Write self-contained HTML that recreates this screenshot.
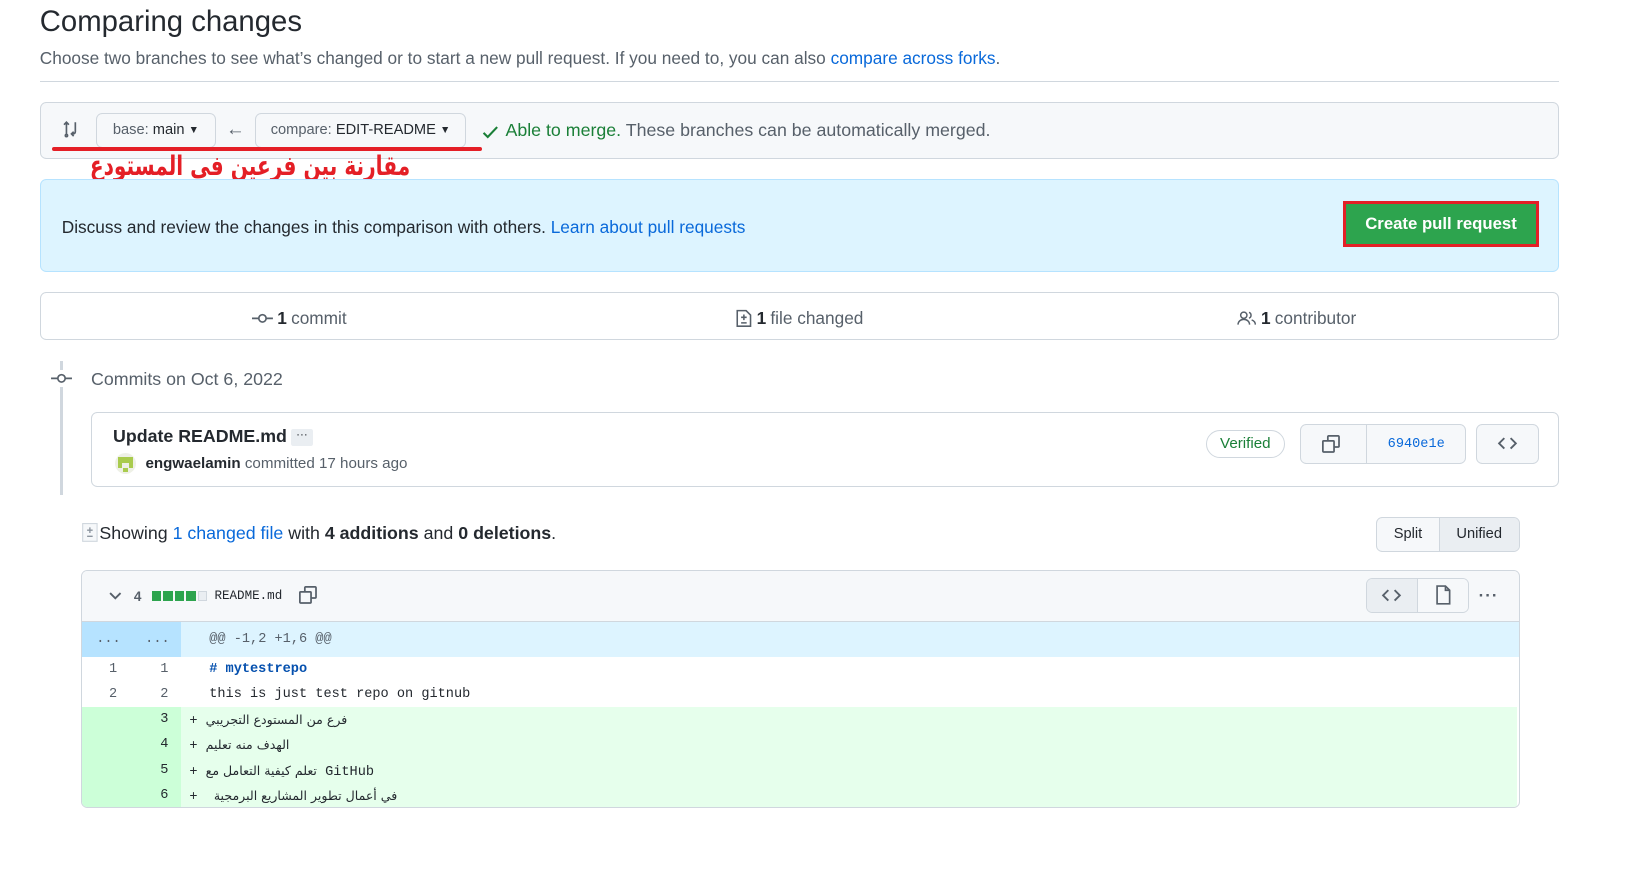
<!DOCTYPE html>
<html><head><meta charset="utf-8"><style>
*{box-sizing:border-box;margin:0;padding:0}
html,body{width:1641px;height:873px;overflow:hidden;background:#fff}
#w{zoom:1.0465;width:1568px;height:835px;position:relative;font-family:"Liberation Sans","Noto Sans CJK SC",sans-serif;color:#24292f}
.a{position:absolute}
.box{position:absolute;border:1px solid #d0d7de;border-radius:6px}
.btn{position:absolute;border:1px solid #d0d7de;border-radius:6px;background:#f6f8fa;font-size:14px;display:flex;align-items:center;justify-content:center}
.mono{font-family:"Liberation Mono","DejaVu Sans Mono",monospace}
.row{position:absolute;left:1px;right:1px;height:24px;font-size:13px;line-height:24px}
.n1,.n2{position:absolute;width:48px;text-align:right;color:#57606a;height:24px}
.n1{left:0;padding-right:14px;width:48px}.n2{left:48px;width:47px;padding-right:12px}
.code{position:absolute;left:95px;right:0;height:24px;padding-left:27px}
.add .n1,.add .n2{background:#ccffd8;color:#24292f}
.add .code{background:#e6ffec;padding-left:8px}
.ar{font-family:"DejaVu Sans","Noto Sans CJK SC",sans-serif;font-size:12px}
svg{display:block}
</style></head><body><div id="w">

<div class="a" style="left:38px;top:5px;font-size:28px">Comparing changes</div>
<div class="a" style="left:38px;top:46px;font-size:16.5px;color:#57606a">Choose two branches to see what’s changed or to start a new pull request. If you need to, you can also <span style="color:#0969da">compare across forks</span>.</div>
<div class="a" style="left:38px;top:77px;width:1452px;height:1px;background:#d0d7de"></div>

<div class="box" style="left:38px;top:97px;width:1452px;height:55px;background:#f6f8fa"></div>
<svg class="a" style="left:59px;top:115px" width="17" height="17" viewBox="0 0 16 16" fill="none" stroke="#57606a" stroke-width="1.5"><path d="M4 14V2M1.8 4.2L4 2l2.2 2.2M12 2v8.5a2 2 0 0 1-2 2H8.5M10.5 10.5l-2 2 2 2"/><circle cx="4" cy="14" r="1"/></svg>
<div class="btn" style="left:92px;top:108px;width:114px;height:33px;color:#57606a">base:&nbsp;<span style="color:#24292f">main</span>&nbsp;<span style="font-size:10px;color:#24292f">▼</span></div>
<div class="a" style="left:216px;top:113px;font-size:18px;color:#57606a">←</div>
<div class="btn" style="left:244px;top:108px;width:201px;height:33px;color:#57606a">compare:&nbsp;<span style="color:#24292f">EDIT-README</span>&nbsp;<span style="font-size:10px;color:#24292f">▼</span></div>
<svg class="a" style="left:461px;top:119px" width="16" height="14" viewBox="0 0 16 14" fill="none" stroke="#1a7f37" stroke-width="2"><path d="M1.5 7.5l4 4L14.5 2"/></svg>
<div class="a" style="left:483px;top:115px;font-size:17px;color:#57606a"><span style="color:#1a7f37">Able to merge.</span> These branches can be automatically merged.</div>
<div class="a" style="left:50px;top:140px;width:411px;height:4px;background:#e41f26;border-radius:2px"></div>
<div class="a" dir="rtl" style="left:-20px;top:144px;width:412px;font-size:26px;font-weight:bold;color:#e41f26;font-family:'DejaVu Sans',sans-serif;white-space:nowrap;text-align:right;transform:scaleX(0.74);transform-origin:right center">مقارنة بين فرعين في المستودع</div>

<div class="a" style="left:38px;top:171px;width:1452px;height:89px;background:#ddf4ff;border:1px solid #b6e3ff;border-radius:6px"></div>
<div class="a" style="left:59px;top:207px;font-size:16.5px">Discuss and review the changes in this comparison with others. <span style="color:#0969da">Learn about pull requests</span></div>
<div class="a" style="left:1283px;top:192px;width:188px;height:44px;border:3px solid #e41f26;background:#2da44e;color:#fff;font-weight:bold;font-size:16px;display:flex;align-items:center;justify-content:center">Create pull request</div>

<div class="box" style="left:38px;top:279px;width:1452px;height:46px"></div>
<div class="a" style="left:241px;top:294px;font-size:16.5px;color:#57606a;display:flex;align-items:center"><svg width="20" height="16" viewBox="0 0 20 16"><circle cx="10" cy="8" r="3.5" fill="none" stroke="#57606a" stroke-width="1.6"/><path d="M0 8h6.5M13.5 8H20" stroke="#57606a" stroke-width="1.6"/></svg><b style="color:#24292f;margin:0 4px 0 4px">1</b>commit</div>
<div class="a" style="left:702px;top:294px;font-size:16.5px;color:#57606a;display:flex;align-items:center"><svg width="17" height="18" viewBox="0 0 16 17"><path d="M2 1.5h8l4 4v10H2z" fill="none" stroke="#57606a" stroke-width="1.4"/><path d="M8 5v5M5.5 7.5h5M5.5 12.5h5" stroke="#57606a" stroke-width="1.4"/></svg><b style="color:#24292f;margin:0 4px">1</b>file changed</div>
<div class="a" style="left:1182px;top:294px;font-size:16.5px;color:#57606a;display:flex;align-items:center"><svg width="19" height="16" viewBox="0 0 19 16"><circle cx="6.5" cy="5" r="3" fill="none" stroke="#57606a" stroke-width="1.4"/><path d="M1 14c0-3 2.5-5 5.5-5s5.5 2 5.5 5M11.5 2.2a3 3 0 0 1 0 5.6M14 9.5c2 .7 3.5 2.3 3.5 4.5" fill="none" stroke="#57606a" stroke-width="1.4"/></svg><b style="color:#24292f;margin:0 4px">1</b>contributor</div>

<div class="a" style="left:57px;top:345px;width:3px;height:128px;background:#d0d7de"></div>
<svg class="a" style="left:48px;top:354px;background:#fff" width="22" height="16" viewBox="0 0 22 16"><circle cx="11" cy="8" r="3.5" fill="none" stroke="#57606a" stroke-width="1.6"/><path d="M1 8h6.5M14.5 8H21" stroke="#57606a" stroke-width="1.6"/></svg>
<div class="a" style="left:87px;top:353px;font-size:17px;color:#57606a">Commits on Oct 6, 2022</div>

<div class="box" style="left:87px;top:394px;width:1403px;height:71px"></div>
<div class="a" style="left:108px;top:407px;font-size:17px;font-weight:bold;color:#24292f">Update README.md</div>
<div class="a" style="left:278px;top:410px;width:21px;height:16px;background:#eaeef2;border-radius:2px;font-size:11px;text-align:center;line-height:12px">···</div>
<div class="a" style="left:110px;top:433px;width:20px;height:20px;border-radius:50%;background:#eef0e6;overflow:hidden"><div class="a" style="left:3px;top:4px;width:14px;height:5px;background:#a9cb4d"></div><div class="a" style="left:3px;top:9px;width:4px;height:5px;background:#a9cb4d"></div><div class="a" style="left:13px;top:9px;width:4px;height:5px;background:#a9cb4d"></div><div class="a" style="left:8px;top:14px;width:4px;height:4px;background:#a9cb4d"></div></div>
<div class="a" style="left:139px;top:435px;font-size:14.5px;color:#57606a"><b style="color:#24292f">engwaelamin</b> committed 17 hours ago</div>
<div class="a" style="left:1152px;top:411px;width:76px;height:27px;border:1px solid #d0d7de;border-radius:14px;color:#1a7f37;font-size:14.5px;text-align:center;line-height:25px">Verified</div>
<div class="btn" style="left:1242px;top:405px;width:159px;height:38px"></div>
<div class="a" style="left:1305px;top:406px;width:1px;height:36px;background:#d0d7de"></div>
<svg class="a" style="left:1262px;top:415px" width="19" height="19" viewBox="0 0 16 16" fill="none" stroke="#57606a" stroke-width="1.4"><path d="M5.5 5.5V2.2a.7.7 0 0 1 .7-.7h7.6a.7.7 0 0 1 .7.7v7.6a.7.7 0 0 1-.7.7h-3.3"/><rect x="1.5" y="5.5" width="9" height="9" rx=".7"/></svg>
<div class="a mono" style="left:1326px;top:418px;font-size:13px;color:#0969da">6940e1e</div>
<div class="btn" style="left:1410px;top:405px;width:61px;height:38px"><svg width="20" height="16" viewBox="0 0 20 16" fill="none" stroke="#57606a" stroke-width="1.8"><path d="M7 3L2 8l5 5M13 3l5 5-5 5"/></svg></div>

<svg class="a" style="left:77px;top:500px" width="17" height="18" viewBox="0 0 16 17"><path d="M1.5 .5h13v16h-13z" fill="#f6f8fa" stroke="#d0d7de"/><path d="M8 4v5M5.5 6.5h5M5.5 12h5" stroke="#8c959f" stroke-width="1.2"/></svg>
<div class="a" style="left:95px;top:500px;font-size:17px">Showing <span style="color:#0969da">1 changed file</span> with <b>4 additions</b> and <b>0 deletions</b>.</div>
<div class="btn" style="left:1315px;top:494px;width:137px;height:33px;overflow:hidden;justify-content:flex-start"><div style="width:59px;text-align:center">Split</div><div style="height:100%;flex:1;background:#eaeef2;border-left:1px solid #d0d7de;display:flex;align-items:center;justify-content:center">Unified</div></div>

<div class="box" style="left:77px;top:545px;width:1375px;height:227px;overflow:hidden">
 <div class="a" style="left:0;top:0;right:0;height:48px;background:#f6f8fa;border-bottom:1px solid #d0d7de"></div>
 <svg class="a" style="left:25px;top:19px" width="14" height="10" viewBox="0 0 14 10" fill="none" stroke="#57606a" stroke-width="1.8"><path d="M2 2l5 5 5-5"/></svg>
 <div class="a" style="left:50px;top:17px;font-size:13px;font-weight:bold;color:#57606a">4</div>
 <div class="a" style="left:67px;top:19px;display:flex;gap:2px"><i style="width:9px;height:9px;background:#2da44e"></i><i style="width:9px;height:9px;background:#2da44e"></i><i style="width:9px;height:9px;background:#2da44e"></i><i style="width:9px;height:9px;background:#2da44e"></i><i style="width:9px;height:9px;background:#eaeef2;border:1px solid #d0d7de"></i></div>
 <div class="a mono" style="left:127px;top:17px;font-size:12px">README.md</div>
 <svg class="a" style="left:207px;top:13px" width="19" height="19" viewBox="0 0 16 16" fill="none" stroke="#57606a" stroke-width="1.4"><path d="M5.5 5.5V2.2a.7.7 0 0 1 .7-.7h7.6a.7.7 0 0 1 .7.7v7.6a.7.7 0 0 1-.7.7h-3.3"/><rect x="1.5" y="5.5" width="9" height="9" rx=".7"/></svg>
 <div class="btn" style="left:1227px;top:6px;width:99px;height:34px;overflow:hidden;justify-content:flex-start;background:#fff"><div style="width:49px;height:100%;background:#eaeef2;border-right:1px solid #d0d7de;display:flex;align-items:center;justify-content:center"><svg width="20" height="16" viewBox="0 0 20 16" fill="none" stroke="#57606a" stroke-width="1.8"><path d="M7 3L2 8l5 5M13 3l5 5-5 5"/></svg></div><div style="flex:1;display:flex;justify-content:center;background:#f6f8fa;height:100%;align-items:center"><svg width="16" height="19" viewBox="0 0 16 19" fill="none" stroke="#57606a" stroke-width="1.6"><path d="M2 1h8l4 4v13H2z"/><path d="M10 1v4h4"/></svg></div></div>
 <div class="a" style="left:1335px;top:14px;font-size:16px;color:#57606a;letter-spacing:1px;font-weight:bold">···</div>

 <div class="a" style="left:0;top:48px;right:0;height:34px;background:#ddf4ff"></div>
 <div class="a" style="left:0;top:48px;width:95px;height:34px;background:#b6e3ff"></div>
 <div class="a mono" style="left:14px;top:58px;font-size:13px;color:#57606a">...&nbsp;&nbsp;&nbsp;...</div>
 <div class="a mono" style="left:122px;top:58px;font-size:13px;color:#57606a">@@ -1,2 +1,6 @@</div>

 <div class="row mono" style="top:82px;left:0"><span class="n1">1</span><span class="n2">1</span><span class="code"><b style="color:#0550ae"># mytestrepo</b></span></div>
 <div class="row mono" style="top:106px;left:0"><span class="n1">2</span><span class="n2">2</span><span class="code">this is just test repo on gitnub</span></div>
 <div class="row mono add" style="top:130px;left:0"><span class="n1"></span><span class="n2">3</span><span class="code">+ <span class="ar">فرع من المستودع التجريبي</span></span></div>
 <div class="row mono add" style="top:154px;left:0"><span class="n1"></span><span class="n2">4</span><span class="code">+ <span class="ar">الهدف منه تعليم</span></span></div>
 <div class="row mono add" style="top:178px;left:0"><span class="n1"></span><span class="n2">5</span><span class="code">+ <span class="ar">تعلم كيفية التعامل مع</span> GitHub</span></div>
 <div class="row mono add" style="top:202px;left:0"><span class="n1"></span><span class="n2">6</span><span class="code">+&nbsp; <span class="ar">في أعمال تطوير المشاريع البرمجية</span></span></div>
</div>
</div></body></html>
